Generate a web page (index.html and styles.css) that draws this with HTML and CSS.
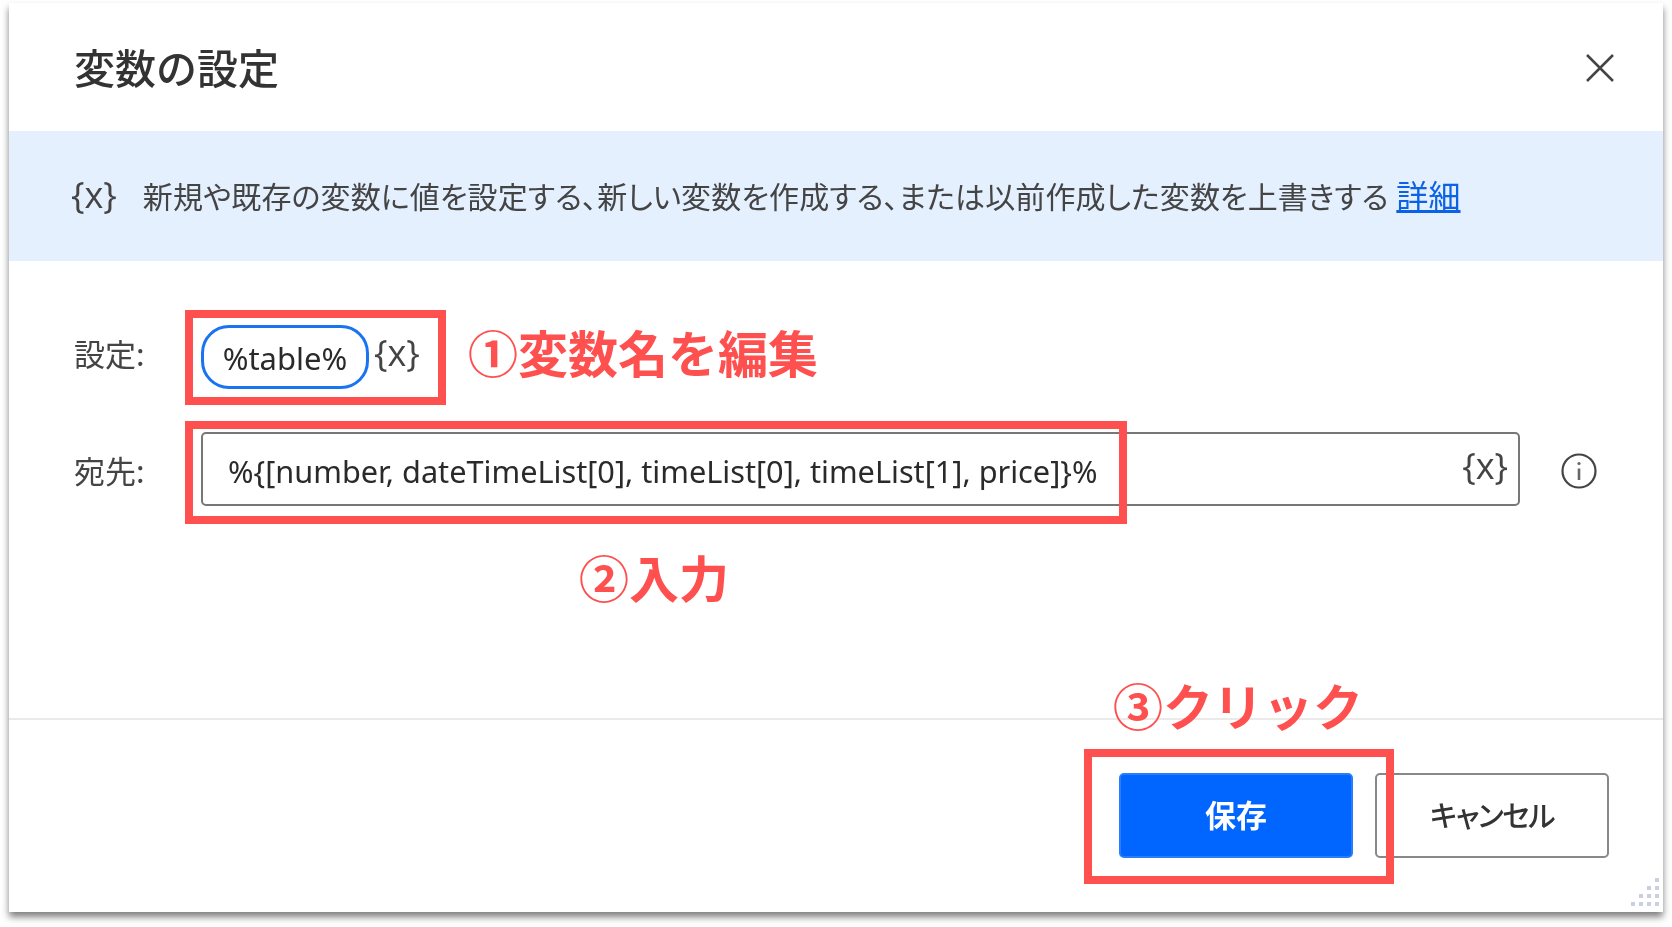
FILE: index.html
```html
<!DOCTYPE html>
<html lang="ja">
<head>
  <meta charset="UTF-8">
  <title>変数の設定</title>
  <link rel="stylesheet" href="styles.css">
</head>
<body>

  <div class="dialog">
    <div class="header">
      <h1>変数の設定</h1>
      <svg class="close" width="30" height="30" viewBox="0 0 30 30"><path d="M2 2L28 28M28 2L2 28"/></svg>
    </div>

    <div class="banner">
      <span class="var-icon banner-icon">{x}</span>
      <p>新規や既存の変数に値を設定する、新しい変数を作成する、または以前作成した変数を上書きする <a href="#">詳細</a></p>
    </div>

    <div class="form">
      <div class="row row-name">
        <label>設定:</label>
        <span class="pill">%table%</span>
        <span class="var-icon">{x}</span>
      </div>
      <div class="row row-value">
        <label>宛先:</label>
        <div class="input">
          <span>%{[number, dateTimeList[0], timeList[0], timeList[1], price]}%</span>
          <span class="var-icon">{x}</span>
        </div>
        <svg class="info" width="36" height="36" viewBox="0 0 36 36">
          <circle cx="18" cy="18" r="16.5"/>
          <path d="M18 15.5V27"/>
          <circle class="dot" cx="18" cy="10.5" r="1.6"/>
        </svg>
      </div>
    </div>

    <div class="footer">
      <button class="btn btn-primary">保存</button>
      <button class="btn btn-cancel">キャンセル</button>
    </div>

    <svg class="grip" width="28" height="28" viewBox="0 0 28 28">
      <rect x="24" y="0" width="4" height="4"/>
      <rect x="24" y="8" width="4" height="4"/><rect x="16" y="8" width="4" height="4"/>
      <rect x="24" y="16" width="4" height="4"/><rect x="16" y="16" width="4" height="4"/><rect x="8" y="16" width="4" height="4"/>
      <rect x="24" y="24" width="4" height="4"/><rect x="16" y="24" width="4" height="4"/><rect x="8" y="24" width="4" height="4"/><rect x="0" y="24" width="4" height="4"/>
    </svg>
  </div>

  <!-- red notes drawn over the dialog -->
  <div class="mark mark-name"></div>
  <div class="mark mark-value"></div>
  <div class="mark mark-save"></div>
  <div class="note note-1">①変数名を編集</div>
  <div class="note note-2">②入力</div>
  <div class="note note-3">③クリック</div>

</body>
</html>
```

FILE: styles.css
```css
body {
  margin: 0;
  height: 927px;
  position: relative;
  overflow: hidden;
  background: #fff;
  color: #333;
  font-family: "Noto Sans", "Noto Sans CJK JP", sans-serif;
}

.dialog {
  position: relative;
  margin: 3px 0 0 9px;
  width: 1654px;
  height: 909px;
  background: #fff;
  box-shadow: 0 5px 7px rgba(0,0,0,0.5);
  display: flex;
  flex-direction: column;
  filter: blur(0.45px);
}

.header {
  height: 128px;
  flex: none;
  display: flex;
  align-items: center;
  justify-content: space-between;
  padding: 0 48px 0 65px;
}

h1 {
  margin: 0 0 2px;
  font-size: 41px;
  font-weight: 500;
  font-family: "Noto Sans CJK JP", sans-serif;
  color: #333;
}

.close {
  position: relative;
  top: 1px;
}

.close path {
  stroke: #444;
  stroke-width: 2.5;
  fill: none;
}

.banner {
  height: 130px;
  flex: none;
  background: #e5f0ff;
  display: flex;
  align-items: center;
  padding-left: 62px;
  font-family: "Noto Sans CJK JP", sans-serif;
  font-size: 30px;
  color: #444;
}

.banner p {
  margin: 0 0 4px 26px;
  font-feature-settings: "palt" 1;
  letter-spacing: 0.1px;
  white-space: nowrap;
}

.banner a {
  color: #0b62e6;
  font-size: 32px;
  margin-left: 1px;
}

.var-icon {
  font-family: "Open Sans", sans-serif;
  font-size: 36px;
  font-weight: 400;
  color: #444;
  white-space: nowrap;
}

.banner-icon {
  margin-bottom: 4px;
}

.form {
  flex: 1;
  padding: 64px 66px 0;
  display: flex;
  flex-direction: column;
  gap: 43px;
}

.row {
  display: flex;
  align-items: center;
}

.row label {
  width: 126px;
  flex: none;
  font-family: "Noto Sans CJK JP", sans-serif;
  font-size: 31px;
  color: #444;
  margin-left: -1px;
}

.row-name label {
  margin-bottom: 10px;
}

.row-name .var-icon {
  margin-bottom: 10px;
}

.row-name {
  height: 64px;
}

.pill {
  width: 168px;
  height: 64px;
  box-sizing: border-box;
  border: 3px solid #1a73f0;
  border-radius: 28px;
  display: flex;
  align-items: center;
  justify-content: center;
  padding-top: 2px;
  font-size: 31px;
  margin: 0 5px 0 1px;
  color: #2a2a2a;
}

.row-value {
  height: 74px;
}

.input {
  flex: 1;
  height: 74px;
  box-sizing: border-box;
  border: 2px solid #777;
  border-radius: 5px;
  display: flex;
  align-items: center;
  justify-content: space-between;
  padding: 0 10px 0 25px;
  font-size: 30.7px;
  margin: 0 41px 0 1px;
  color: #2a2a2a;
}

.input > span:first-child {
  padding-top: 4px;
}

.input .var-icon {
  margin-bottom: 8px;
}

.info {
  position: relative;
  top: 2px;
}

.info circle {
  fill: none;
  stroke: #444;
  stroke-width: 2.2;
}

.info .dot {
  fill: #666;
  stroke: none;
}

.info path {
  stroke: #666;
  stroke-width: 2.6;
}

.footer {
  height: 194px;
  flex: none;
  box-sizing: border-box;
  border-top: 2px solid #eceae8;
  padding: 53px 54px 0 0;
  display: flex;
  justify-content: flex-end;
  align-items: flex-start;
  gap: 22px;
}

.btn {
  width: 234px;
  height: 85px;
  box-sizing: border-box;
  border: 2px solid #888;
  border-radius: 5px;
  background: #fff;
  color: #333;
  font-family: "Noto Sans CJK JP", sans-serif;
  font-size: 31px;
  font-weight: 500;
  padding-bottom: 5px;
}

.btn-primary {
  background: #0066ff;
  border-color: #2a7dfa;
  color: #fff;
  font-weight: 700;
}

.btn-cancel {
  font-size: 29px;
  letter-spacing: -1.5px;
  font-feature-settings: "palt" 1;
}

.grip {
  position: absolute;
  right: 4px;
  bottom: 6px;
}

.grip rect {
  fill: #c9d0e0;
}

.mark {
  position: absolute;
  box-sizing: border-box;
  border: 8px solid #ff5050;
}

.mark-name {
  left: 185px;
  top: 310px;
  width: 261px;
  height: 95px;
}

.mark-value {
  left: 185px;
  top: 421px;
  width: 942px;
  height: 103px;
}

.mark-save {
  left: 1084px;
  top: 749px;
  width: 310px;
  height: 135px;
}

.note {
  position: absolute;
  font-family: "Noto Sans CJK JP", sans-serif;
  font-weight: 700;
  font-size: 50px;
  line-height: 60px;
  color: #ff5050;
  white-space: nowrap;
}

.note-1 {
  left: 468px;
  top: 321px;
}

.note-2 {
  left: 579px;
  top: 546px;
}

.note-3 {
  left: 1113px;
  top: 674px;
}
```
